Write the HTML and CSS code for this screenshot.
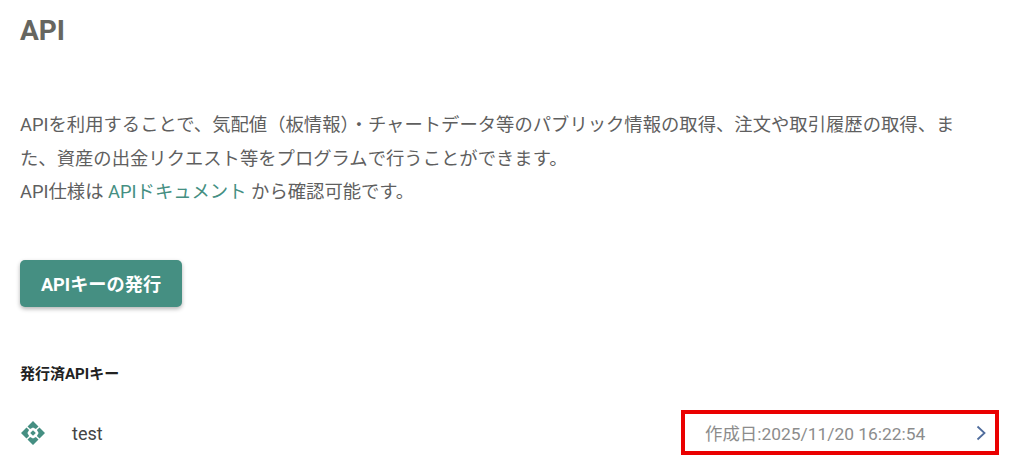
FILE: index.html
```html
<!DOCTYPE html>
<html lang="ja">
<head>
<meta charset="utf-8">
<title>API</title>
<link rel="stylesheet" href="styles.css">
</head>
<body>
<main class="page">
  <h1 class="title">API</h1>
  <p class="desc">APIを利用することで、気配値（板情報）・チャートデータ等のパブリック情報の取得、注文や取引履歴の取得、また、資産の出金リクエスト等をプログラムで行うことができます。<br>API仕様は <a class="link" href="#">APIドキュメント</a> から確認可能です。</p>
  <button class="btn" type="button">APIキーの発行</button>
  <h2 class="sub">発行済APIキー</h2>
  <div class="row">
    <svg class="key-icon" viewBox="0 0 26 26" width="26" height="26" aria-hidden="true">
      <path fill="#458f82" d="M13 1l5.5 5.5-2.6 2.6L13 7.4l-2.9 1.7-2.6-2.6zM25 13l-5.5 5.5-2.6-2.6 1.7-2.9-1.7-2.9 2.6-2.6zM13 25l-5.5-5.5 2.6-2.6 2.9 1.7 2.9-1.7 2.6 2.6zM1 13l5.5-5.5 2.6 2.6L7.4 13l1.7 2.9-2.6 2.6z"/>
      <rect fill="#458f82" x="11" y="11" width="4" height="4" transform="rotate(45 13 13)"/>
    </svg>
    <span class="name">test</span>
    <div class="meta">
      <span class="date">作成日:2025/11/20 16:22:54</span>
      <svg class="chev" viewBox="0 0 10 16" width="10" height="16" aria-hidden="true"><path d="M1.5 1.5L8.5 8l-7 6.5" fill="none" stroke="#4f6c9c" stroke-width="1.8"/></svg>
    </div>
  </div>
</main>
</body>
</html>
```
FILE: styles.css
```css
html, body { margin: 0; padding: 0; background: #fff; }
body { font-family: Roboto, "Noto Sans CJK JP", sans-serif; overflow: hidden; height: 467px; }
.page { padding: 0 32px 0 20px; width: 960px; }
.title { margin: 0; padding-top: 13px; font-size: 28px; line-height: 36px; font-weight: 700; color: #666660; }
.desc { margin: 0; padding-top: 59px; max-width: 945px; font-size: 18.33px; line-height: 33.5px; color: #5f5f5f; }
.link { color: #458f82; text-decoration: none; }
.btn { display: block; margin-top: 51px; width: 162px; height: 47px; border: 0; border-radius: 5px; background: #458f82; color: #fff; font: 700 18.2px Roboto, "Noto Sans CJK JP", sans-serif; box-shadow: 0 2px 4px rgba(0,0,0,.3); padding: 0; }
.sub { margin: 0; padding-top: 57px; font-size: 15px; line-height: 20px; font-weight: 700; color: #222; }
.row { display: flex; align-items: center; margin-top: 36px; height: 26px; }
.key-icon { flex: none; }
.name { margin-left: 26px; padding-top: 2px; font-size: 18px; color: #444; }
.meta { margin-left: auto; margin-right: -19px; display: flex; align-items: center; justify-content: space-between; box-sizing: border-box; width: 318px; height: 45px; border: 4px solid #ea0000; padding: 0 9px 0 20px; flex: none; }
.date { font-size: 17.4px; color: #8c8c8c; }
```
